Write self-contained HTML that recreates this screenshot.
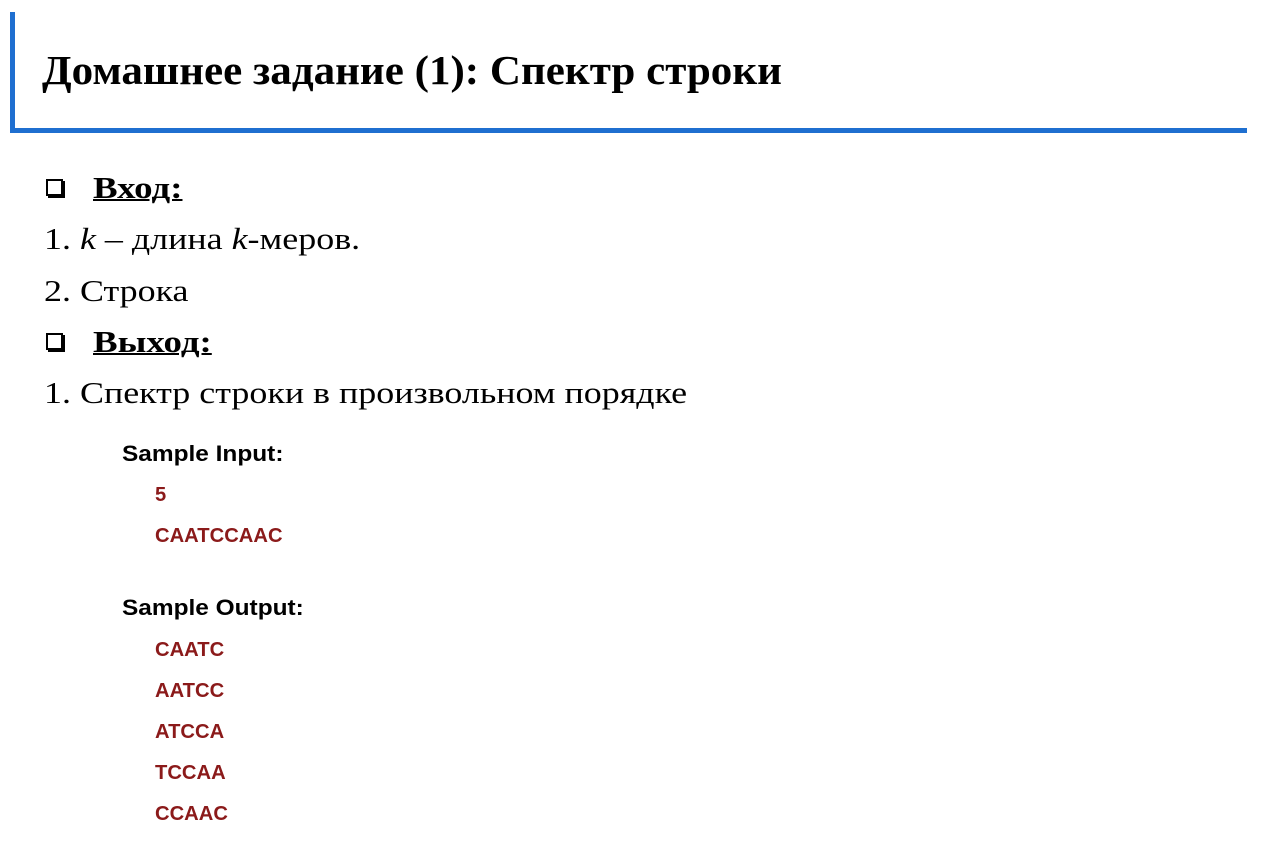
<!DOCTYPE html>
<html><head><meta charset="utf-8"><style>
body{margin:0;width:1280px;height:843px;background:#fff;position:relative;overflow:hidden;font-family:"Liberation Serif",serif;color:#000}
.a{position:absolute;white-space:nowrap;line-height:1;transform-origin:0 0}
.vl{position:absolute;left:10px;top:12px;width:5px;height:121px;background:#1f6fd0}
.hl{position:absolute;left:10px;top:128px;width:1237px;height:5px;background:#1f6fd0}
.t{font-weight:bold;font-size:41px;left:42px;top:50px;transform:scaleX(1.05)}
.s{font-size:31px;transform:scaleX(1.16)}
.b{width:13px;height:13px;border:2px solid #000;box-shadow:2px 2px 0 #000;left:46px}
.h{font-weight:bold;text-decoration:underline;text-decoration-thickness:2px;transform:scaleX(1.19)}
.ss{font-family:"Liberation Sans",sans-serif;font-weight:bold;font-size:22px;left:122px;transform:scaleX(1.11)}
.c{font-family:"Liberation Sans",sans-serif;font-weight:bold;font-size:20px;color:#8b1a1a;left:155px;transform:scaleX(1.01)}
</style></head><body>
<div class="vl"></div><div class="hl"></div>
<div class="a t">Домашнее задание (1): Спектр строки</div>
<div class="a b" style="top:179px"></div>
<div class="a s h" style="left:93px;top:172px">Вход:</div>
<div class="a s" style="left:44px;top:223px">1. <i>k</i> – длина <i>k</i>-меров.</div>
<div class="a s" style="left:44px;top:275px">2. Строка</div>
<div class="a b" style="top:333px"></div>
<div class="a s h" style="left:93px;top:326px">Выход:</div>
<div class="a s" style="left:44px;top:377px">1. Спектр строки в произвольном порядке</div>
<div class="a ss" style="top:443px">Sample Input:</div>
<div class="a c" style="top:485px">5</div>
<div class="a c" style="top:526px">CAATCCAAC</div>
<div class="a ss" style="top:597px">Sample Output:</div>
<div class="a c" style="top:640px">CAATC</div>
<div class="a c" style="top:681px">AATCC</div>
<div class="a c" style="top:722px">ATCCA</div>
<div class="a c" style="top:763px">TCCAA</div>
<div class="a c" style="top:804px">CCAAC</div>
</body></html>
